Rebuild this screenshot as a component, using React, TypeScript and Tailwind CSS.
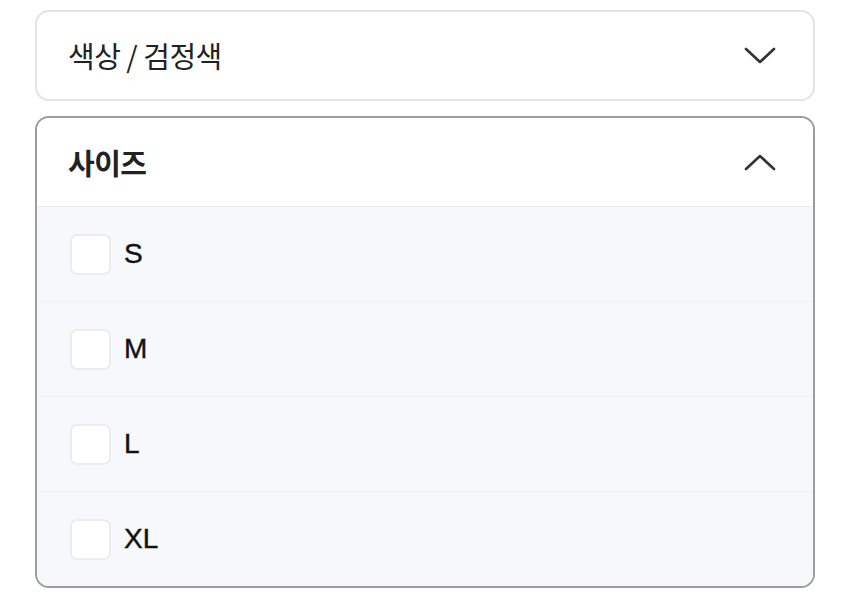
import { useState } from 'react';

const SIZES = ['S', 'M', 'L', 'XL'];

function Chevron({ up }: { up?: boolean }) {
  return (
    <svg className="w-[34px] h-[20px] text-[#333]" viewBox="0 0 34 20" fill="none" stroke="currentColor" strokeWidth={2.6} strokeLinecap="round" strokeLinejoin="round">
      {up ? <path d="M3 17L17 4l14 13" /> : <path d="M3 3l14 13L31 3" />}
    </svg>
  );
}

export default function App() {
  const [checked, setChecked] = useState<Record<string, boolean>>({});

  return (
    <div className="w-[850px] h-[599px] bg-white pt-[10px] px-[35px] flex flex-col gap-[15px] font-['Noto_Sans_CJK_KR','Noto_Sans',sans-serif] text-[#222]">
      {/* Color (collapsed) */}
      <div className="h-[91px] border-2 border-[#e4e4e4] rounded-[14px] flex items-center justify-between pl-[31px] pr-[36px]">
        <span className="text-[29px] leading-none tracking-[-0.5px]">색상 / 검정색</span>
        <Chevron />
      </div>

      {/* Size (expanded) */}
      <div className="border-2 border-[#9c9c9c] rounded-[14px] overflow-hidden">
        <div className="h-[89px] bg-white flex items-center justify-between pl-[31px] pr-[36px] border-b border-[#ececec]">
          <span className="text-[29px] leading-none font-bold tracking-[-0.5px]">사이즈</span>
          <Chevron up />
        </div>
        {SIZES.map((s, i) => (
          <label
            key={s}
            className={`bg-[#f7f8fb] flex items-center pl-[33px] gap-[13px] cursor-pointer ${i < SIZES.length - 1 ? 'h-[95px] border-b border-[#eff0f3]' : 'h-[94px]'}`}
          >
            <input
              type="checkbox"
              className="appearance-none w-[41px] h-[41px] rounded-[7px] bg-white border-2 border-[#ececec] checked:bg-[#222]"
              checked={!!checked[s]}
              onChange={() => setChecked({ ...checked, [s]: !checked[s] })}
            />
            <span className="text-[28px] leading-none font-['Liberation_Sans',sans-serif] text-[#111] [-webkit-text-stroke:0.4px_#111]">{s}</span>
          </label>
        ))}
      </div>
    </div>
  );
}
